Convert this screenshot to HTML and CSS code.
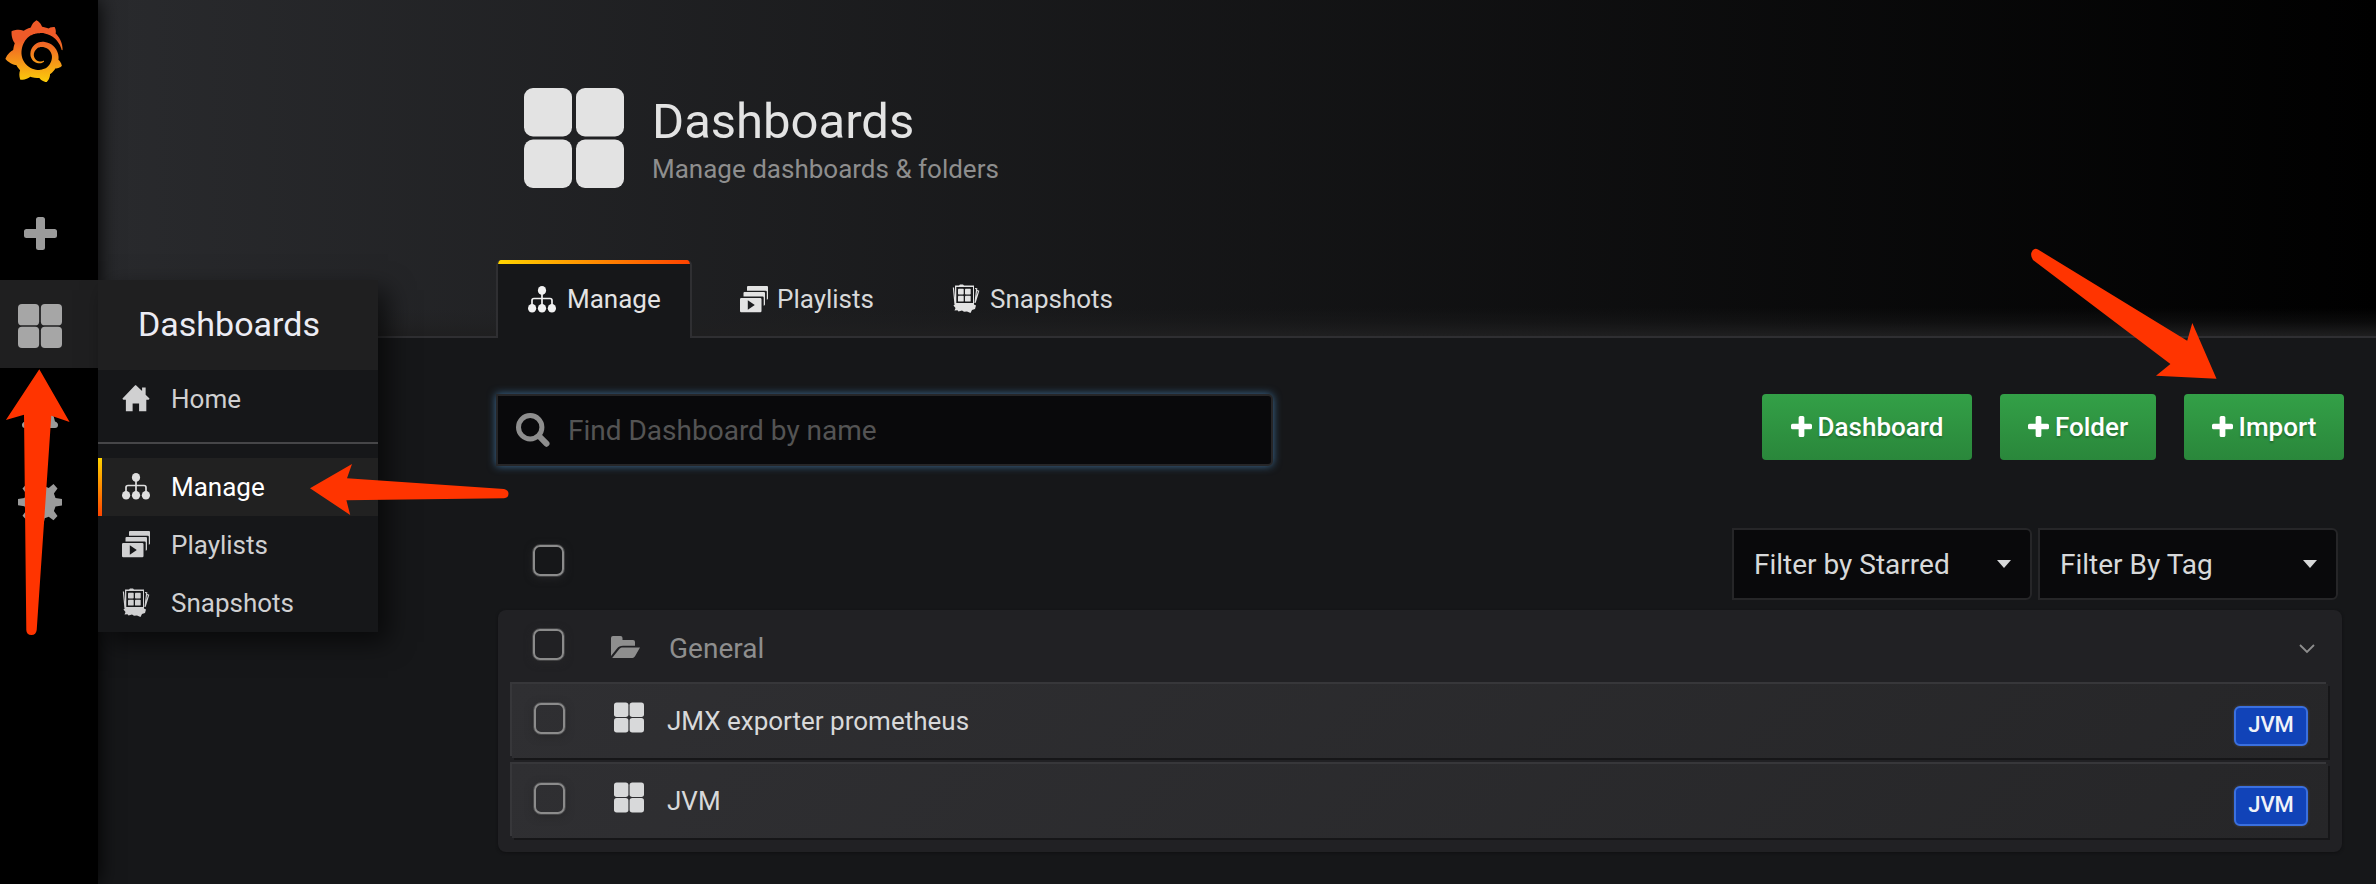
FILE: index.html
```html
<!DOCTYPE html>
<html lang="en">
<head>
<meta charset="utf-8">
<title>Dashboards</title>
<link rel="stylesheet" href="styles.css">
</head>
<body>
<svg class="defs" width="0" height="0" aria-hidden="true">
  <defs>
    <linearGradient id="flame" gradientUnits="userSpaceOnUse" x1="175" y1="445" x2="175" y2="114">
      <stop offset="0" stop-color="#fff100"/><stop offset="1" stop-color="#f05a28"/>
    </linearGradient>
    <symbol id="i-plus" viewBox="0 0 33 33"><path d="M14.500 0h4a2.500 2.500 0 0 1 2.500 2.500V12h9.500a2.500 2.500 0 0 1 2.500 2.500v4a2.500 2.500 0 0 1-2.500 2.500H21v9.500a2.500 2.500 0 0 1-2.500 2.500h-4a2.500 2.500 0 0 1-2.500-2.500V21H2.500A2.500 2.500 0 0 1 0 18.500v-4A2.500 2.500 0 0 1 2.500 12H12V2.500A2.500 2.500 0 0 1 14.500 0z"/></symbol>
    <symbol id="i-grid" viewBox="0 0 100 100"><rect width="48" height="48.500" rx="9"/><rect x="52" width="48" height="48.500" rx="9"/><rect y="51.500" width="48" height="48.500" rx="9"/><rect x="52" y="51.500" width="48" height="48.500" rx="9"/></symbol>
    <symbol id="i-home" viewBox="0 0 28 28"><path d="M14 0.300 L20.300 6.300 V2.600 H24 V10 L28 14 Q28 15.200 27 15.200 H24.700 V27.200 H17.200 V19.200 H10.500 V27.200 H3.500 V15.200 H1 Q0 15.200 0 14 L12.600 0.900 Q14 -.300 14 .300z"/></symbol>
    <symbol id="i-tree" viewBox="0 0 28 27"><ellipse cx="14" cy="4.400" rx="4.100" ry="4.400"/><ellipse cx="4.100" cy="22.200" rx="4.100" ry="4.300"/><ellipse cx="14" cy="22.200" rx="4.100" ry="4.300"/><ellipse cx="23.900" cy="22.200" rx="4.100" ry="4.300"/><path d="M14 8v12M4 20v-5.500q0-2 2-2h16q2 0 2 2V20" fill="none" stroke="currentColor" stroke-width="1.700"/></symbol>
    <symbol id="i-play" viewBox="0 0 28 27"><path d="M8 0H27q1 0 1 1V12.500q0 1-1.200 1.200V5.700q0-1-1-1H7V1q0-1 1-1z"/><path d="M4.500 6H24q1 0 1 1v11.500q0 1-1.300 1.200V11.500q0-1-1-1H3.500V7q0-1 1-1z"/><path fill-rule="evenodd" d="M1.200 12H20.300q1.200 0 1.200 1.200V25q0 1.200-1.200 1.200H1.200Q0 26.200 0 25V13.200Q0 12 1.200 12zM7.800 14.200v9.600l7-4.800z"/></symbol>
    <symbol id="i-snap" viewBox="0 0 28 30"><path fill-rule="evenodd" d="M3 1.500 L7 1.500 8 .500 11 .500 12 1.500 22 1.500 22 20.500 24 21.500 23 25 20 26 18.500 29 15 27.500 12 27.800 10 26.500 6.500 27.500 5.500 26.300 2.500 26.500 3.500 24 1.500 21.500 3 20zM4.300 3v16H21V3z"/><rect x="6" y="4.700" width="5.700" height="5.800" rx=".700"/><rect x="13" y="4.700" width="5.700" height="5.800" rx=".700"/><rect x="6" y="11.800" width="5.700" height="5.800" rx=".700"/><rect x="13" y="11.800" width="5.700" height="5.800" rx=".700"/><path d="M1.400 3.500 L3 20M23 4.500l1.700.300L23 19M25 6.500l1.600.600L23.300 18" fill="none" stroke="currentColor" stroke-width="1.200"/></symbol>
    <symbol id="i-folder" viewBox="0 0 29 22"><path d="M0 2Q0 0 2 0h7.500q2 0 2 2v2H22q2 0 2 2v3.700H12C9 9.700 7.600 10.500 6 12.500L0 20z"/><path d="M1.200 22 7.500 14C9 12 10 11.600 12 11.600h17l-5 8.700Q23 22 21.500 22z"/></symbol>
  </defs>
</svg>

<div class="app">
  <nav class="sidebar">
    <svg class="logo" viewBox="0 0 351 365"><path fill="url(#flame)" d="M342,161.2c-0.6-6.1-1.6-13.1-3.6-20.900c-2-7.700-5-16.200-9.400-25c-4.400-8.800-10.100-17.900-17.500-26.800c-2.900-3.500-6.100-6.900-9.500-10.200c5.100-20.300-6.200-37.900-6.200-37.900c-19.500-1.200-31.900,6.100-36.500,9.400c-0.800-0.300-1.500-0.700-2.300-1c-3.300-1.300-6.700-2.600-10.300-3.700c-3.500-1.100-7.100-2.100-10.800-3c-3.700-0.900-7.400-1.600-11.200-2.200c-0.700-0.100-1.300-0.200-2-0.300c-8.500-27.200-32.900-38.600-32.900-38.600c-27.300,17.300-32.400,41.500-32.400,41.500s-0.100,0.500-0.300,1.400c-1.500,0.400-3,0.900-4.500,1.300c-2.100,0.600-4.200,1.400-6.200,2.200c-2.100,0.800-4.100,1.600-6.200,2.500c-4.100,1.800-8.200,3.800-12.200,6c-3.900,2.200-7.700,4.600-11.400,7.100c-0.500-0.200-1-0.400-1-0.400c-37.800-14.400-71.300,2.900-71.300,2.900c-3.100,40.200,15.100,65.500,18.700,70.100c-0.900,2.500-1.700,5-2.500,7.500c-2.800,9.100-4.900,18.400-6.200,28.100c-0.200,1.400-0.400,2.800-0.500,4.200C18.800,192.700,8.500,228,8.500,228c29.100,33.500,63.100,35.600,63.100,35.600c0,0,0.100-0.100,0.100-0.100c4.300,7.700,9.300,15,14.900,21.900c2.400,2.900,4.800,5.600,7.400,8.300c-10.600,30.400,1.500,55.600,1.500,55.600c32.400,1.200,53.700-14.200,58.200-17.700c3.200,1.100,6.500,2.100,9.800,2.900c10,2.600,20.200,4.100,30.400,4.500c2.500,0.100,5.100,0.200,7.600,0.100l1.200,0l0.800,0l1.600,0l1.600-0.100l0,0.100c15.300,21.800,42.100,24.900,42.100,24.900c19.100-20.100,20.200-40.100,20.200-44.400l0,0c0,0,0-0.100,0-0.300c0-0.400,0-0.600,0-0.600l0,0c0-0.300,0-0.600,0-0.900c4-2.800,7.800-5.800,11.400-9.100c7.600-6.900,14.300-14.800,19.900-23.300c0.500-0.800,1-1.600,1.500-2.400c21.600,1.200,36.900-13.400,36.900-13.400c-3.600-22.500-16.400-33.500-19.100-35.600l0,0c0,0-0.100-0.100-0.300-0.200c-0.200-0.100-0.200-0.200-0.200-0.200c0,0,0,0,0,0c-0.100-0.100-0.300-0.200-0.500-0.300c0.100-1.400,0.200-2.700,0.300-4.100c0.200-2.400,0.200-4.900,0.200-7.300l0-1.800l0-0.900l0-0.500c0-0.600,0-0.400,0-0.600l-0.100-1.500l-0.100-2c0-0.700-0.100-1.300-0.200-1.900c-0.100-0.600-0.100-1.300-0.200-1.900l-0.200-1.900l-0.300-1.900c-0.400-2.500-0.800-4.900-1.400-7.400c-2.300-9.700-6.100-18.900-11-27.200c-5-8.300-11.200-15.600-18.300-21.800c-7-6.200-14.900-11.200-23.100-14.900c-8.300-3.700-16.900-6.100-25.500-7.200c-4.300-0.600-8.600-0.800-12.900-0.700l-1.600,0l-0.400,0c-0.100,0-0.600,0-0.500,0l-0.700,0l-1.600,0.100c-0.600,0-1.200,0.100-1.700,0.100c-2.200,0.200-4.400,0.500-6.500,0.900c-8.600,1.600-16.700,4.700-23.800,9c-7.100,4.300-13.300,9.600-18.300,15.600c-5,6-8.900,12.700-11.600,19.600c-2.700,6.900-4.200,14.100-4.600,21c-0.100,1.700-0.100,3.500-0.100,5.200c0,0.400,0,0.900,0,1.300l0.100,1.400c0.100,0.800,0.100,1.700,0.200,2.500c0.300,3.500,1,6.900,1.900,10.100c1.900,6.500,4.900,12.400,8.600,17.400c3.700,5,8.200,9.100,12.900,12.400c4.700,3.200,9.800,5.500,14.800,7c5,1.500,10,2.100,14.700,2.100c0.600,0,1.200,0,1.700,0c0.300,0,0.600,0,0.900,0c0.300,0,0.600,0,0.900-0.100c0.500,0,1-0.100,1.500-0.100c0.100,0,0.300,0,0.400-0.100l0.500-0.100c0.300,0,0.600-0.100,0.900-0.100c0.600-0.100,1.100-0.200,1.700-0.300c0.600-0.100,1.100-0.200,1.600-0.400c1.100-0.200,2.100-0.600,3.100-0.900c2-0.700,4-1.500,5.700-2.400c1.800-0.900,3.400-2,5-3c0.400-0.300,0.900-0.600,1.300-1c1.600-1.300,1.900-3.700,0.600-5.300c-1.100-1.400-3.100-1.800-4.700-0.900c-0.400,0.200-0.800,0.400-1.200,0.600c-1.400,0.700-2.800,1.300-4.300,1.800c-1.500,0.500-3.100,0.900-4.700,1.200c-0.800,0.100-1.600,0.200-2.500,0.300c-0.400,0-0.800,0.100-1.300,0.100c-0.400,0-0.900,0-1.200,0c-0.400,0-0.800,0-1.200,0c-0.500,0-1,0-1.500-0.100c0,0-0.300,0-0.100,0l-0.200,0l-0.300,0c-0.200,0-0.500,0-0.700-0.100c-0.500-0.100-0.900-0.100-1.400-0.200c-3.700-0.500-7.400-1.600-10.900-3.200c-3.600-1.600-7-3.800-10.100-6.600c-3.100-2.800-5.800-6.100-7.900-9.900c-2.100-3.800-3.600-8-4.300-12.400c-0.300-2.200-0.500-4.500-0.400-6.700c0-0.600,0.100-1.200,0.100-1.800c0,0.200,0-0.100,0-0.100l0-0.200l0-0.500c0-0.300,0.100-0.600,0.100-0.900c0.100-1.200,0.300-2.400,0.500-3.600c1.700-9.600,6.500-19,13.900-26.100c1.900-1.800,3.900-3.400,6-4.900c2.100-1.500,4.400-2.800,6.800-3.900c2.400-1.100,4.800-2,7.400-2.700c2.500-0.700,5.100-1.100,7.800-1.400c1.300-0.100,2.600-0.200,4-0.200c0.400,0,0.600,0,0.900,0l1.100,0l0.700,0c0.300,0,0,0,0.100,0l0.300,0l1.100,0.100c2.900,0.200,5.700,0.600,8.500,1.300c5.600,1.200,11.100,3.300,16.200,6.100c10.200,5.700,18.900,14.500,24.200,25.100c2.700,5.300,4.600,11,5.500,16.900c0.200,1.500,0.400,3,0.500,4.500l0.100,1.100l0.100,1.100c0,0.400,0,0.800,0,1.100c0,0.400,0,0.800,0,1.100l0,1l0,1.100c0,0.700-0.100,1.900-0.100,2.600c-0.100,1.600-0.300,3.300-0.500,4.900c-0.200,1.600-0.500,3.200-0.800,4.800c-0.300,1.600-0.700,3.200-1.100,4.700c-0.800,3.100-1.800,6.200-3,9.300c-2.400,6-5.600,11.800-9.400,17.100c-7.700,10.600-18.200,19.200-30.200,24.700c-6,2.700-12.300,4.700-18.800,5.700c-3.200,0.600-6.500,0.900-9.800,1l-0.600,0l-0.500,0l-1.100,0l-1.600,0l-0.800,0c0.400,0-0.100,0-0.100,0l-0.300,0c-1.800,0-3.500-0.100-5.300-0.300c-7-0.500-13.900-1.800-20.700-3.700c-6.700-1.900-13.200-4.600-19.400-7.800c-12.300-6.600-23.400-15.600-32-26.500c-4.300-5.400-8.100-11.300-11.200-17.400c-3.100-6.100-5.600-12.600-7.400-19.100c-1.800-6.600-2.900-13.300-3.400-20.100l-0.100-1.300l0-0.300l0-0.300l0-0.600l0-1.100l0-0.300l0-0.400l0-0.800l0-1.600l0-0.300c0,0,0,0.100,0-0.100l0-0.600c0-0.800,0-1.700,0-2.500c0.100-3.300,0.400-6.800,0.800-10.200c0.400-3.400,1-6.900,1.700-10.300c0.700-3.400,1.500-6.800,2.500-10.200c1.900-6.700,4.300-13.200,7.100-19.300c5.700-12.200,13.100-23.100,22-31.800c2.200-2.200,4.500-4.200,6.900-6.200c2.400-1.900,4.900-3.700,7.500-5.400c2.500-1.700,5.200-3.200,7.900-4.600c1.300-0.700,2.700-1.400,4.100-2c0.700-0.300,1.400-0.600,2.100-0.900c0.700-0.300,1.400-0.600,2.100-0.900c2.800-1.200,5.700-2.200,8.700-3.100c0.700-0.200,1.500-0.400,2.200-0.700c0.700-0.200,1.500-0.400,2.200-0.600c1.500-0.400,3-0.800,4.500-1.100c0.700-0.200,1.500-0.300,2.300-0.500c0.800-0.200,1.500-0.300,2.300-0.500c0.800-0.100,1.500-0.300,2.300-0.400l1.100-0.200l1.200-0.200c0.800-0.100,1.500-0.200,2.300-0.300c0.900-0.100,1.700-0.200,2.600-0.300c0.700-0.100,1.900-0.200,2.600-0.300c0.500-0.100,1.100-0.100,1.600-0.200l1.100-0.100l0.500-0.100l0.600,0c0.900-0.100,1.700-0.100,2.600-0.200l1.300-0.100c0,0,0.500,0,0.100,0l0.300,0l0.600,0c0.700,0,1.500-0.100,2.200-0.100c2.900-0.100,5.900-0.100,8.800,0c5.800,0.200,11.500,0.900,17,1.900c11.100,2.100,21.500,5.600,31,10.300c9.500,4.600,17.900,10.300,25.300,16.500c0.500,0.400,0.900,0.800,1.400,1.200c0.400,0.400,0.900,0.800,1.300,1.200c0.900,0.800,1.700,1.600,2.600,2.400c0.900,0.800,1.700,1.600,2.500,2.400c0.800,0.800,1.600,1.600,2.400,2.500c3.100,3.300,6,6.600,8.600,10c5.200,6.700,9.400,13.500,12.700,19.900c0.200,0.400,0.400,0.800,0.600,1.200c0.200,0.400,0.400,0.800,0.600,1.200c0.400,0.800,0.800,1.600,1.100,2.400c0.400,0.800,0.700,1.500,1.100,2.300c0.300,0.800,0.700,1.500,1,2.300c1.200,3,2.400,5.900,3.300,8.600c1.500,4.400,2.600,8.300,3.500,11.700c0.300,1.400,1.600,2.300,3,2.100c1.500-0.100,2.600-1.300,2.600-2.800C342.600,170.400,342.500,166.100,342,161.200z"/></svg>
    <div class="side-item side-plus"><svg class="ic33"><use href="#i-plus"/></svg></div>
    <div class="side-item is-open">
      <svg class="ic44"><use href="#i-grid"/></svg>
      <div class="flyout">
        <div class="flyout-title">Dashboards</div>
        <a class="flyout-link"><svg class="ic28"><use href="#i-home"/></svg><span>Home</span></a>
        <div class="flyout-divider"></div>
        <a class="flyout-link is-active"><svg class="ic28"><use href="#i-tree"/></svg><span>Manage</span></a>
        <a class="flyout-link"><svg class="ic28"><use href="#i-play"/></svg><span>Playlists</span></a>
        <a class="flyout-link"><svg class="ic28 snap"><use href="#i-snap"/></svg><span>Snapshots</span></a>
      </div>
    </div>
    <div class="side-item"><svg class="ic44" viewBox="0 0 44 44"><path d="M22 2c3 0 3 3 3 4 7 2 9 7 9 12l3 11.500q3 1 3 3.500 0 3-3 3H7q-3 0-3-3 0-2.500 3-3.500L10 18c0-5 2-10 9-12 0-1 0-4 3-4z"/></svg></div>
    <div class="side-item gear"><svg class="ic44" viewBox="0 0 44 44"><path d="M18.500 0h7l1.200 6.200 4 1.700L35.500 4l4 4.500-3.600 5 1.600 4.500L44 19v6.500l-6.500 1-1.600 4.500 3.600 5-4 4.300-4.800-3.600-4 1.500L25.500 44h-7l-1.200-6-4-1.500-4.800 3.600-4-4.300 3.600-5-1.600-4.500-6.500-1V19l6.500-1 1.600-4.500-3.600-5 4-4.500 4.800 3.900 4-1.700z"/></svg></div>
  </nav>

  <main class="main">
    <header class="page-header">
      <div class="heading">
        <svg class="ic100"><use href="#i-grid"/></svg>
        <div class="heading-text">
          <h1>Dashboards</h1>
          <p>Manage dashboards &amp; folders</p>
        </div>
      </div>
      <div class="tabs">
        <a class="tab is-active"><svg class="ic28"><use href="#i-tree"/></svg><span>Manage</span></a>
        <a class="tab tab-playlists"><svg class="ic28"><use href="#i-play"/></svg><span>Playlists</span></a>
        <a class="tab tab-snapshots"><svg class="ic28 snap"><use href="#i-snap"/></svg><span>Snapshots</span></a>
      </div>
    </header>

    <div class="content">
      <div class="action-bar">
        <div class="search">
          <svg class="search-icon" viewBox="0 0 34 34"><circle cx="14.200" cy="14.300" r="11.700" fill="none" stroke="#8e8e8e" stroke-width="5"/><path d="M23.500 23.500 30.500 30.700" stroke="#8e8e8e" stroke-width="6" stroke-linecap="round"/></svg>
          <span>Find Dashboard by name</span>
        </div>
        <div class="buttons">
          <a class="btn btn-dashboard"><svg><use href="#i-plus"/></svg><span>Dashboard</span></a>
          <a class="btn btn-folder"><svg><use href="#i-plus"/></svg><span>Folder</span></a>
          <a class="btn btn-import"><svg><use href="#i-plus"/></svg><span>Import</span></a>
        </div>
      </div>

      <div class="filter-bar">
        <span class="checkbox"></span>
        <div class="filters">
          <div class="select"><span>Filter by Starred</span><i class="caret"></i></div>
          <div class="select"><span>Filter By Tag</span><i class="caret"></i></div>
        </div>
      </div>

      <section class="folder">
        <div class="folder-head">
          <span class="checkbox"></span>
          <svg class="folder-icon"><use href="#i-folder"/></svg>
          <span class="folder-name">General</span>
          <svg class="chevron" viewBox="0 0 16 10"><path d="M1 1l7 7 7-7" fill="none" stroke="#8e8e8e" stroke-width="1.800"/></svg>
        </div>
        <div class="row">
          <span class="checkbox"></span>
          <svg class="row-icon"><use href="#i-grid"/></svg>
          <span class="row-name">JMX exporter prometheus</span>
          <span class="tag">JVM</span>
        </div>
        <div class="row">
          <span class="checkbox"></span>
          <svg class="row-icon"><use href="#i-grid"/></svg>
          <span class="row-name">JVM</span>
          <span class="tag">JVM</span>
        </div>
      </section>
    </div>
  </main>

  <svg class="annotations" viewBox="0 0 2376 884">
    <path d="M39.300 369.300 69.600 422 51.300 415.700 36.700 630Q36 635 31.500 635 26.500 635 26.300 630L24 414.700 5.900 420z"/>
    <path d="M310 488.300 352 464 347 478.300 504 489Q508.500 490 508.500 493.800 508.500 498 504 498.300L346.400 500.300 350.200 515z"/>
    <path d="M2216.500 378.700 2192.300 323 2187.200 340.700 2038 249.500Q2035 247.500 2032.500 250.500 2029.500 255 2033 260L2170.400 364 2156 375.700z"/>
  </svg>
</div>
</body>
</html>
```
FILE: styles.css
```css
* { box-sizing: border-box; }
body { margin: 0; background: #161719; color: #d8d9da; font-family: Roboto, "Liberation Sans", sans-serif; font-size: 26px; }
svg { display: block; flex: none; fill: currentColor; }
.defs { position: absolute; }
.app { position: relative; display: flex; width: 2376px; height: 884px; overflow: hidden; }

.ic28 { width: 28px; height: 27px; }
.ic28.snap { height: 30px; }
.ic33 { width: 33px; height: 33px; }
.ic44 { width: 44px; height: 44px; }
.ic100 { width: 100px; height: 100px; color: #e3e3e3; }

/* Sidebar */
.sidebar { position: relative; z-index: 2; width: 98px; flex: none; background: #000; box-shadow: 0 0 20px #000; color: #9b9b9b; padding-top: 20px; }
.logo { width: 60px; height: 62.400px; margin: 0 0 109.600px 4px; }
.side-item { position: relative; height: 88px; padding: 24px 18px; }
.side-plus { padding: 25px 24px; }
.gear { padding-top: 24px; }
.side-item.is-open { background: #1f1f20; color: #a6a6a6; }

.flyout { position: absolute; left: 98px; top: 0; width: 280px; background: #161719; box-shadow: 10px 10px 24px rgba(0, 0, 0, .6); color: #d0d0d1; }
.side-item.is-open .flyout { z-index: 3; }
.flyout-title { height: 90px; line-height: 88px; padding-left: 40px; background: #1f1f20; color: #ececf4; font-size: 34px; }
.flyout-link { display: flex; align-items: center; height: 58px; padding-left: 24px; gap: 21px; }
.flyout-link.is-active { background: #212121; color: #fff; border-left: 4px solid; border-image: linear-gradient(#ffd500, #ff4400 99%) 1; padding-left: 20px; }
.flyout-link.is-active svg { color: #dedede; }
.flyout-divider { height: 2px; margin: 14px 0; background: #464648; }

/* Page header */
.main { flex: 1; min-width: 0; }
.page-header { height: 338px; padding: 88px 0 0 398px; border-bottom: 2px solid #2f2f32; background: linear-gradient(transparent 308px, rgba(31, 31, 32, .35) 322px, #1f1f20 336px), linear-gradient(90deg, #292a2d, #000); }
.heading { display: flex; height: 172px; padding-left: 28px; gap: 28px; }
.heading-text { padding-top: 5px; }
.heading h1 { margin: 0; font-size: 49px; font-weight: 400; line-height: 58px; color: #e3e3e3; }
.heading p { margin: 0; line-height: 36px; color: #8e8e8e; }
.tabs { display: flex; color: #d8d9da; }
.tabs svg { color: #e3e3e3; }
.tab { display: flex; align-items: center; height: 78px; gap: 10px; }
.tab.is-active { position: relative; width: 196px; padding-left: 30px; gap: 11px; border: 2px solid #2f2f32; border-width: 0 2px; border-radius: 5px 5px 0 0; background: #161719; color: #e3e3e3; overflow: hidden; }
.tab.is-active::before { content: ""; position: absolute; left: 0; right: 0; top: 0; height: 4px; background: linear-gradient(90deg, #ffd500, #ff4400 99%); }
.tab.is-active svg { color: #f2f2f2; }
.tab-playlists { margin-left: 48px; gap: 9px; }
.tab-snapshots { margin-left: 78px; }

/* Toolbar */
.content { padding: 56px 32px 0 398px; }
.action-bar { display: flex; justify-content: space-between; align-items: flex-start; }
.search { display: flex; align-items: center; width: 777px; height: 72px; padding-left: 18px; gap: 18px; border: 2px solid #262628; border-radius: 0 5px 5px 0; background: #09090b; box-shadow: 0 0 8px #3c6d97; color: #545454; font-size: 28px; }
.search-icon { width: 34px; height: 34px; }
.buttons { display: flex; gap: 28px; }
.btn { display: flex; align-items: center; justify-content: center; height: 66px; gap: 6px; border-radius: 4px; background: linear-gradient(#33a047, #2a873b); color: #fff; font-weight: 500; text-shadow: 0 2px 2px rgba(0, 0, 0, .25); }
.btn-dashboard { width: 210px; }
.btn-folder { width: 156px; }
.btn-import { width: 160px; }
.btn svg { width: 21px; height: 21px; margin-top: -2px; }

.filter-bar { display: flex; justify-content: space-between; align-items: flex-start; height: 72px; margin-top: 62px; padding: 0 6px 0 37px; }
.checkbox { flex: none; width: 31px; height: 31px; border: 2.500px solid #8b8b8b; outline: .5px solid rgba(139, 139, 139, .3); border-radius: 7px; box-shadow: 0 2px 8px #262628; }
.filter-bar .checkbox { margin-top: 17px; }
.filters { display: flex; gap: 6px; }
.select { display: flex; align-items: center; justify-content: space-between; width: 300px; height: 72px; padding: 0 19px 0 20px; border: 2px solid #262628; border-radius: 0 6px 6px 0; background: #09090b; font-size: 28px; }
.caret { width: 14px; border: 7px solid transparent; border-top: 8px solid #d8d9da; border-bottom: 0; }

/* Dashboard list */
.folder { height: 242px; margin: 10px 2px 0; padding: 0 14px; border-radius: 8px; background: #212124; box-shadow: 0 1px 3px #101012; }
.folder-head { display: flex; align-items: flex-start; height: 74px; padding: 19px 13px 0 21px; color: #8e8e8e; font-size: 28px; }
.folder-icon { width: 29px; height: 22px; margin: 7px 0 0 47px; }
.folder-name { flex: 1; margin: 2px 0 0 29px; line-height: 35px; }
.chevron { width: 16px; height: 10px; margin-top: 15px; }
.row { display: flex; align-items: flex-start; height: 74px; margin-bottom: 6px; padding: 19px 20px 0 22px; background: linear-gradient(135deg, #2f2f32, #262628); box-shadow: -2px -2px 0 #37373a, 2px 2px 0 #161618; }
.row-icon { width: 30px; height: 31px; margin: -1px 0 0 49px; color: #d8d9da; }
.row-name { flex: 1; margin-left: 23px; line-height: 36px; }
.tag { width: 74px; height: 40px; margin-top: 3px; border: 2px solid #3a70e0; border-radius: 6px; background: #1143b8; color: #f0f2f8; font-size: 22px; font-weight: 500; line-height: 33px; text-align: center; box-shadow: 0 0 3px #4a4a4d; }

/* Callout arrows drawn over the page */
.annotations { position: absolute; z-index: 5; left: 0; top: 0; width: 2376px; height: 884px; fill: #ff3400; pointer-events: none; }
```
